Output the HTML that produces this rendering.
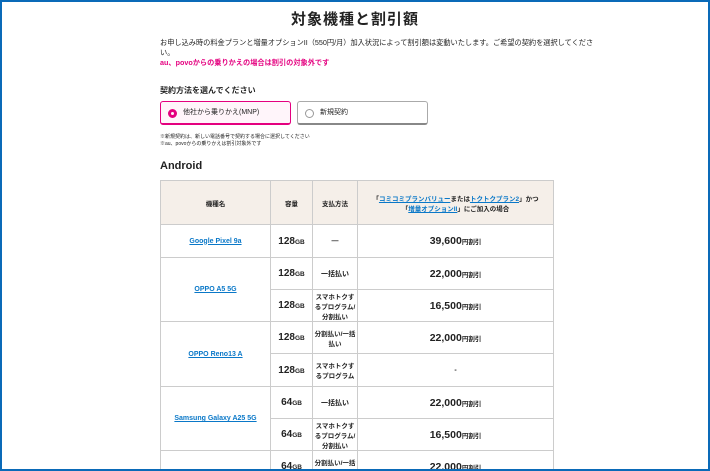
<!DOCTYPE html>
<html><head><meta charset="utf-8"><style>
*{margin:0;padding:0;box-sizing:border-box}
html,body{width:710px;height:471px;overflow:hidden}
body{background:#fff;font-family:"Liberation Sans","Noto Sans CJK JP",sans-serif;color:#222;position:relative}
.wrap{position:absolute;left:0;top:0;width:710px;height:471px;overflow:hidden}
.frame{position:absolute;left:0;top:0;width:710px;height:471px;border:2px solid #0a6ab8;pointer-events:none;z-index:5}
h1{position:absolute;top:8px;left:0;width:710px;text-align:center;font-size:15px;font-weight:bold;letter-spacing:1px}
.p{position:absolute;left:160px;font-size:7.2px;white-space:nowrap}
.pink{color:#e4007f;font-weight:bold}
.btn{position:absolute;top:101px;width:131px;height:24px;border-radius:3px;font-size:7px;padding-left:22px;line-height:22px}
.b1{left:160px;border:1px solid #e4007f;border-bottom:2px solid #e4007f;background:#fff5fa}
.b2{left:297px;border:1px solid #aaa;border-bottom:2px solid #888}
.r{position:absolute;left:7px;top:7px;width:9px;height:9px;border-radius:50%}
.b1 .r{border:3px solid #e4007f}
.b2 .r{border:1px solid #999}
table{position:absolute;left:160px;top:180px;border-collapse:collapse;width:394px}
td{border:1px solid #ccc;text-align:center;font-size:7px;font-weight:bold;padding:0}
th{border:1px solid #ccc;background:#f5efe9;font-size:6.5px;height:44px}
a{color:#0a78c8;text-decoration:underline}
.n{font-size:10px}
.n small{font-size:6.5px;font-weight:bold}
.m{font-size:10.5px}
</style></head><body>
<div class="wrap">
<div class="frame"></div>
<h1>対象機種と割引額</h1>
<div class="p" style="top:38px">お申し込み時の料金プランと増量オプションII（550円/月）加入状況によって割引額は変動いたします。ご希望の契約を選択してくださ</div>
<div class="p" style="top:48px">い。</div>
<div class="p pink" style="top:58px">au、povoからの乗りかえの場合は割引の対象外です</div>
<div class="p" style="top:85px;font-size:8px;font-weight:bold">契約方法を選んでください</div>
<div class="btn b1"><span class="r"></span>他社から乗りかえ(MNP)</div>
<div class="btn b2"><span class="r"></span>新規契約</div>
<div class="p" style="top:133px;font-size:5px">※新規契約は、新しい電話番号で契約する場合に選択してください</div>
<div class="p" style="top:140px;font-size:5px">※au、povoからの乗りかえは割引対象外です</div>
<div class="p" style="top:160px;font-size:11px;font-weight:bold">Android</div>
<table>
<tr><th style="width:110px">機種名</th><th style="width:42px">容量</th><th style="width:45px">支払方法</th><th>「<a>コミコミプランバリュー</a>または<a>トクトクプラン2</a>」かつ<br>「<a>増量オプションII</a>」にご加入の場合</th></tr>
<tr style="height:33px"><td><a>Google Pixel 9a</a></td><td class="n">128<small>GB</small></td><td>—</td><td class="m">39,600<small style="font-size:6.5px">円割引</small></td></tr>
<tr style="height:32px"><td rowspan="2"><a>OPPO A5 5G</a></td><td class="n">128<small>GB</small></td><td>一括払い</td><td class="m">22,000<small style="font-size:6.5px">円割引</small></td></tr>
<tr style="height:32px"><td class="n">128<small>GB</small></td><td style="font-size:6.5px">スマホトクす<br>るプログラム/<br>分割払い</td><td class="m">16,500<small style="font-size:6.5px">円割引</small></td></tr>
<tr style="height:32px"><td rowspan="2"><a>OPPO Reno13 A</a></td><td class="n">128<small>GB</small></td><td style="font-size:6.5px">分割払い/一括<br>払い</td><td class="m">22,000<small style="font-size:6.5px">円割引</small></td></tr>
<tr style="height:33px"><td class="n">128<small>GB</small></td><td style="font-size:6.5px">スマホトクす<br>るプログラム</td><td>-</td></tr>
<tr style="height:32px"><td rowspan="2"><a>Samsung Galaxy A25 5G</a></td><td class="n">64<small>GB</small></td><td>一括払い</td><td class="m">22,000<small style="font-size:6.5px">円割引</small></td></tr>
<tr style="height:32px"><td class="n">64<small>GB</small></td><td style="font-size:6.5px">スマホトクす<br>るプログラム/<br>分割払い</td><td class="m">16,500<small style="font-size:6.5px">円割引</small></td></tr>
<tr style="height:32px"><td></td><td class="n">64<small>GB</small></td><td style="font-size:6.5px">分割払い/一括<br>払い</td><td class="m">22,000<small style="font-size:6.5px">円割引</small></td></tr>
</table>
</div>
</body></html>
